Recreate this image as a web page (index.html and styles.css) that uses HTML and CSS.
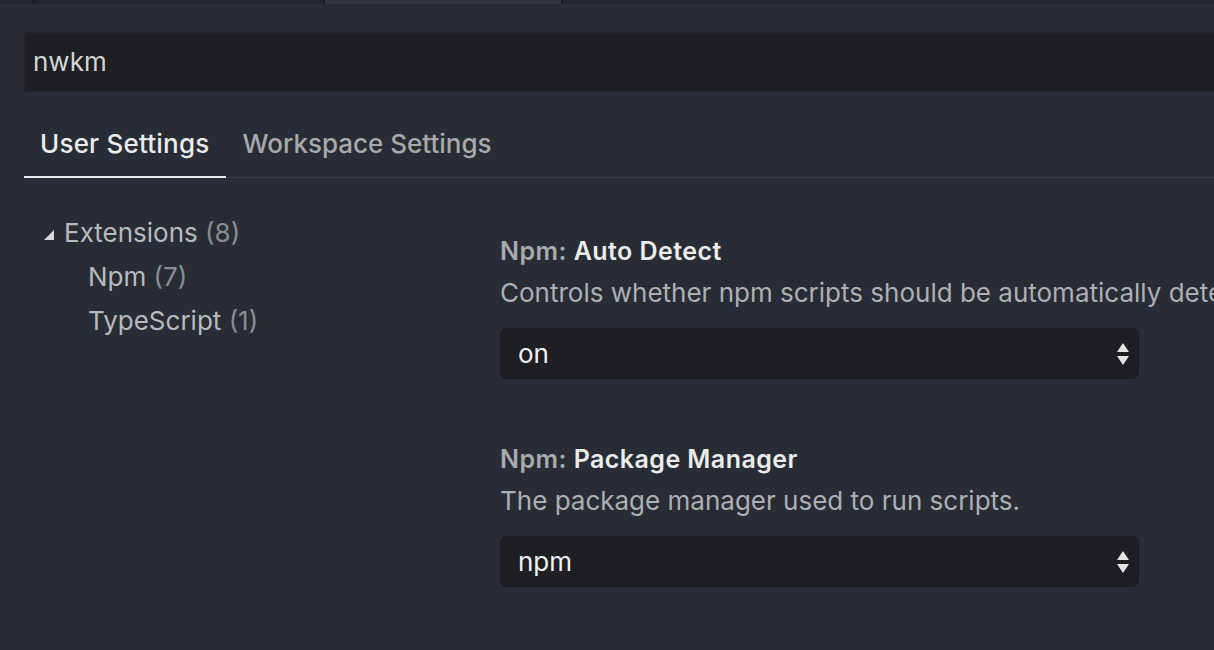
FILE: index.html
```html
<!DOCTYPE html>
<html lang="en">
<head>
    <meta charset="UTF-8">
    <title>Settings</title>
    <link rel="stylesheet" href="styles.css">
</head>
<body>
    <div class="tab-strip">
        <div class="strip-tab first"></div>
        <div class="strip-tab second"></div>
        <div class="strip-tab active"></div>
        <div class="strip-tab rest"></div>
    </div>

    <div class="editor">
        <div class="search">nwkm</div>

        <div class="tabs">
            <div class="tab selected">User Settings</div>
            <div class="tab">Workspace Settings</div>
        </div>

        <div class="settings-body">
            <!-- table of contents -->
            <ul class="toc">
                <li class="toc-group">
                    <span class="twistie"></span>Extensions <span class="count">(8)</span>
                </li>
                <li class="toc-item">Npm <span class="count">(7)</span></li>
                <li class="toc-item">TypeScript <span class="count">(1)</span></li>
            </ul>

            <div class="setting-list">
                <div class="setting">
                    <div class="setting-title"><span class="category">Npm: </span>Auto Detect</div>
                    <div class="setting-desc">Controls whether npm scripts should be automatically detected. Default is on.</div>
                    <div class="select">
                        <span>on</span>
                        <svg class="arrows" width="12" height="22" viewBox="0 0 12 22">
                            <path d="M6 0 L12 9 L0 9 Z" fill="#e4e4e4"/>
                            <path d="M0 13 L12 13 L6 22 Z" fill="#e4e4e4"/>
                        </svg>
                    </div>
                </div>

                <div class="setting">
                    <div class="setting-title"><span class="category">Npm: </span>Package Manager</div>
                    <div class="setting-desc">The package manager used to run scripts.</div>
                    <div class="select">
                        <span>npm</span>
                        <svg class="arrows" width="12" height="22" viewBox="0 0 12 22">
                            <path d="M6 0 L12 9 L0 9 Z" fill="#e4e4e4"/>
                            <path d="M0 13 L12 13 L6 22 Z" fill="#e4e4e4"/>
                        </svg>
                    </div>
                </div>
            </div>
        </div>
    </div>
</body>
</html>
```

FILE: styles.css
```css
/* Settings editor, dark theme */
body {
    margin: 0;
    padding: 0;
    background-color: #282c34;
    color: #d7d8da;
    font-family: Inter, "Noto Sans", sans-serif;
    font-size: 26px;
    overflow: hidden;
}

.tab-strip {
    display: flex;
    height: 4px;
    background-color: #21252b;
}

.strip-tab {
    height: 4px;
}

.strip-tab.first {
    width: 33px;
    border-right: 2px solid #1a1c21;
}

.strip-tab.second {
    width: 288px;
    border-right: 2px solid #1a1c21;
}

.strip-tab.active {
    width: 236px;
    background-color: #30343d;
    border-right: 2px solid #1a1c21;
}

.strip-tab.rest {
    flex: 1;
}

.editor {
    padding-left: 24px;
}

.search {
    margin-top: 28px;
    height: 58px;
    line-height: 58px;
    padding-left: 8px;
    background-color: #1e1f23;
    border: 1px solid #23252a;
    border-right: none;
    color: #d4d4d4;
}

.tabs {
    display: flex;
    padding-top: 32px;
    border-bottom: 1px solid #3c3e42;
}

.tab {
    padding: 0 16px 12px;
    line-height: 40px;
    font-weight: 500;
    color: #a9a9a9;
    border-bottom: 2px solid transparent;
    margin-bottom: -1px;
}

.tab.selected {
    padding-right: 17px;
    letter-spacing: 0.2px;
    color: #ececec;
    border-bottom-color: #e8e8e8;
}

.settings-body {
    display: grid;
    grid-template-columns: 476px 1fr;
    align-items: start;
}

.toc {
    list-style: none;
    margin: 33px 0 0;
    padding: 0;
}

.toc li {
    line-height: 44px;
    color: #b9babc;
    white-space: nowrap;
}

.count {
    color: #8b8d91;
}

.toc-group {
    padding-left: 20px;
}

.twistie {
    display: inline-block;
    width: 0;
    height: 0;
    border-left: 10px solid transparent;
    border-bottom: 10px solid #d8d8d8;
    margin-right: 10px;
    vertical-align: 2px;
}

.toc-item {
    padding-left: 64px;
}

.setting-list {
    padding-top: 55px;
    overflow: hidden;
}

.setting {
    margin-bottom: 62px;
}

.setting-title {
    font-size: 25px;
    letter-spacing: 0.45px;
    line-height: 36px;
    font-weight: 600;
    color: #ececec;
    white-space: nowrap;
}

.category {
    color: #a9aaac;
}

.setting-desc {
    margin-top: 6px;
    line-height: 36px;
    color: #aeafb2;
    white-space: nowrap;
}

.select {
    display: flex;
    align-items: center;
    justify-content: space-between;
    box-sizing: border-box;
    width: 639px;
    height: 51px;
    margin-top: 17px;
    padding: 0 9px 0 17px;
    background-color: #1e1f23;
    border: 1px solid #1a1b1f;
    border-radius: 7px;
    color: #f2f2f2;
}
```
